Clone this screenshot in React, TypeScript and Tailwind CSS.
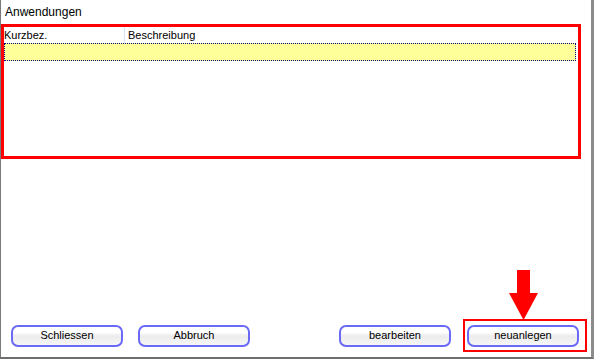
export default function App() {
  const btn =
    "w-[112px] h-[22px] rounded-[7px] border-2 border-[#6a6af6] bg-linear-to-b from-white from-30% via-[#ececec] to-[#f6f6f6] text-[11px] leading-none text-black flex items-center justify-center";

  return (
    <div className="relative w-[594px] h-[359px] bg-white border-l border-l-[#7a7a7a] border-r-[3px] border-r-[#8c8c8c] border-b-2 border-b-[#6e6e6e] flex flex-col font-['Liberation_Sans',Arial,sans-serif] text-black">
      <div className="h-[24px] pl-[4px] pt-[5px] text-[12px] leading-[15px]">Anwendungen</div>

      {/* Tabelle mit Markierung */}
      <div className="w-[580px] h-[135px] border-[3px] border-[#ff0000]">
        <div className="flex h-[16px] text-[11px] leading-[16px]">
          <div className="w-[121px] border-r border-[#d4e6f7] pl-[0px]">Kurzbez.</div>
          <div className="pl-[3px]">Beschreibung</div>
        </div>
        <div className="w-[572px] h-[18px] bg-[#ffff99] border border-dotted border-[#000080]"></div>
      </div>

      <div className="flex-1"></div>

      <div className="flex items-center pl-[10px] pr-[4px] pb-[5px]">
        <button className={btn}>Schliessen</button>
        <button className={btn + " ml-[15px]"}>Abbruch</button>
        <div className="flex-1"></div>
        <button className={btn}>bearbeiten</button>
        <div className="ml-[12px] w-[124px] h-[33px] border-2 border-[#ff0000] pl-[2px] flex items-center">
          <button className={btn}>neuanlegen</button>
        </div>
      </div>

      {/* roter Pfeil */}
      <svg className="absolute left-[508px] top-[270px]" width="29" height="50" viewBox="0 0 29 50">
        <polygon points="8,0 21,0 21,23 29,23 14.5,50 0,23 8,23" fill="#ff0000" />
      </svg>
    </div>
  );
}
